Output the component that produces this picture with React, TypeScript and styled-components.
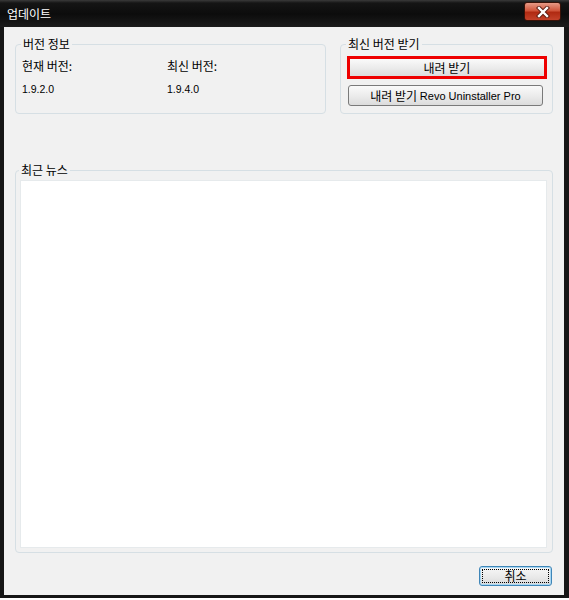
import styled, { createGlobalStyle } from "styled-components"

const GlobalStyle = createGlobalStyle`
  html, body {
    margin: 0;
    padding: 0;
    background: #ffffff;
  }
  body {
    font-family: "Noto Sans CJK KR", "Liberation Sans", sans-serif;
  }
`

const App = () => {
  return (
    <>
      <GlobalStyle />
      <Window>
        <TitleBar>
          <Title>업데이트</Title>
          <CloseButton>
            <svg width="16" height="12" viewBox="0 0 16 12">
              <path d="M4 2 L12 10 M12 2 L4 10" stroke="#5a1a10" strokeWidth="4.2" strokeLinecap="square" />
              <path d="M4 2 L12 10 M12 2 L4 10" stroke="#ffffff" strokeWidth="2.4" strokeLinecap="square" />
            </svg>
          </CloseButton>
        </TitleBar>
        <Client>
          <TopRow>
            <Group $width={311}>
              <Legend>버전 정보</Legend>
              <InfoGrid>
                <Label>현재 버전:</Label>
                <Label>최신 버전:</Label>
                <Version>1.9.2.0</Version>
                <Version>1.9.4.0</Version>
              </InfoGrid>
            </Group>
            <Group>
              <Legend>최신 버전 받기</Legend>
              <ButtonStack>
                <PushButton $highlight>내려 받기</PushButton>
                <PushButton>
                  내려 받기 <Latin>Revo Uninstaller Pro</Latin>
                </PushButton>
              </ButtonStack>
            </Group>
          </TopRow>
          <NewsGroup>
            <Legend>최근 뉴스</Legend>
            <NewsBody />
          </NewsGroup>
          <Footer>
            <CancelButton>
              <Focus>취소</Focus>
            </CancelButton>
          </Footer>
        </Client>
      </Window>
    </>
  )
}

const Window = styled.div`
  width: 569px;
  height: 598px;
  box-sizing: border-box;
  background: #161616;
  display: flex;
  flex-direction: column;
`

const TitleBar = styled.div`
  height: 27px;
  display: flex;
  align-items: flex-start;
  justify-content: space-between;
  padding: 0 8px 0 7px;
  background: linear-gradient(#3a3a3a 0px, #151515 3px, #0c0c0c 14px, #1c1c1c 27px);
`

const Title = styled.span`
  color: #ffffff;
  font-size: 12px;
  line-height: 14px;
  margin-top: 7px;
`

const CloseButton = styled.div`
  width: 37px;
  height: 19px;
  margin-top: 2px;
  box-sizing: border-box;
  border: 1px solid #3a1208;
  border-radius: 3px;
  background: linear-gradient(#e79a86 0%, #d0553b 45%, #b02a12 55%, #c3422a 100%);
  display: flex;
  align-items: center;
  justify-content: center;
`

const Client = styled.div`
  flex: 1;
  margin: 0 5px 3px 4px;
  background: #f1f1f1;
  padding: 10px 11px 9px 11px;
  display: flex;
  flex-direction: column;
`

const TopRow = styled.div`
  display: flex;
  gap: 14px;
  height: 77px;
`

const Group = styled.fieldset<{ $width?: number }>`
  margin: 0;
  padding: 0 6px;
  min-width: 0;
  border: 1px solid #d6dfe4;
  border-radius: 4px;
  box-sizing: border-box;
  ${(p) => (p.$width ? `width: ${p.$width}px;` : "flex: 1;")}
`

const Legend = styled.legend`
  padding: 0 2px;
  margin-left: -1px;
  font-size: 12px;
  line-height: 14px;
  color: #000000;
`

const InfoGrid = styled.div`
  display: grid;
  grid-template-columns: 145px 1fr;
  row-gap: 9px;
  padding-top: 8px;
`

const Label = styled.span`
  font-size: 12px;
  line-height: 14px;
  color: #000000;
`

const Version = styled.span`
  font-family: "Liberation Sans", sans-serif;
  font-size: 10.5px;
  line-height: 14px;
  color: #000000;
`

const ButtonStack = styled.div`
  display: flex;
  flex-direction: column;
  align-items: flex-start;
  gap: 6px;
  padding-top: 5px;
`

const PushButton = styled.div<{ $highlight?: boolean }>`
  box-sizing: border-box;
  width: ${(p) => (p.$highlight ? 200 : 195)}px;
  height: ${(p) => (p.$highlight ? 23 : 21)}px;
  margin-left: ${(p) => (p.$highlight ? 0 : 1)}px;
  border: ${(p) => (p.$highlight ? "3px solid #ee0000" : "1px solid #7a7a7a")};
  border-radius: ${(p) => (p.$highlight ? 0 : 3)}px;
  background: linear-gradient(#fafafa 0%, #ececec 50%, #dcdcdc 100%);
  display: flex;
  align-items: center;
  justify-content: center;
  font-size: 12px;
  color: #000000;
  white-space: pre;
`

const Latin = styled.span`
  font-family: "Liberation Sans", sans-serif;
  font-size: 11px;
`

const NewsGroup = styled.fieldset`
  margin: 49px 0 0 0;
  padding: 3px 5px 0 4px;
  min-width: 0;
  height: 390px;
  box-sizing: border-box;
  border: 1px solid #d6dfe4;
  border-radius: 4px;
`

const NewsBody = styled.div`
  height: 366px;
  background: #ffffff;
  border: 1px solid #e6eaec;
`

const Footer = styled.div`
  display: flex;
  justify-content: flex-end;
  padding: 13px 1px 0 0;
`

const CancelButton = styled.div`
  box-sizing: border-box;
  width: 73px;
  height: 20px;
  border: 1px solid #3f86b8;
  border-radius: 3px;
  box-shadow: inset 0 0 0 1px #a7d6f2;
  background: linear-gradient(#f8f8f8 0%, #e8e8e8 60%, #d8d8d8 100%);
  padding: 2px;
  display: flex;
`

const Focus = styled.span`
  flex: 1;
  border: 1px dotted #000000;
  display: flex;
  align-items: center;
  justify-content: center;
  font-size: 12px;
  line-height: 12px;
  color: #000000;
`

export default App
